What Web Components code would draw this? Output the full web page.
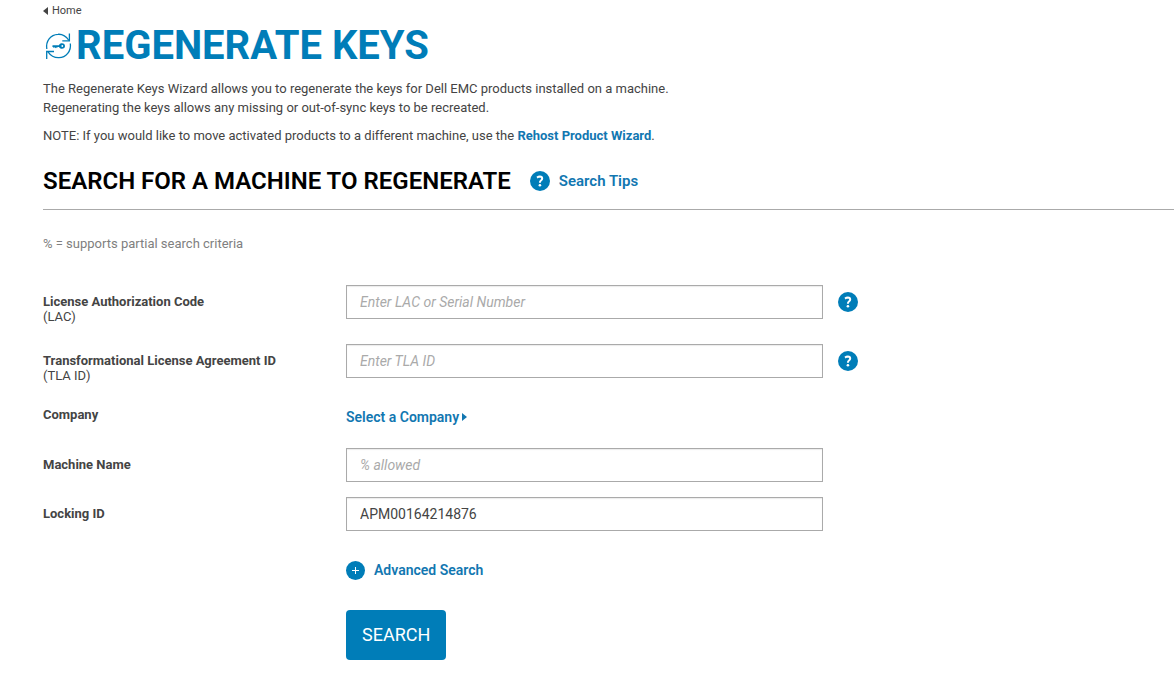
<!DOCTYPE html>
<html lang="en">
<head>
<meta charset="utf-8">
<meta name="viewport" content="width=device-width, initial-scale=1">
<title>Regenerate Keys</title>
<style>
  body {
    --brand: #007db8;
    --link: #1277b1;
    --line: #aaa;
    margin: 0;
    background: #fff;
    color: #444;
    font: 13px/19px Roboto, "Liberation Sans", sans-serif;
  }
</style>
</head>
<body>
<regenerate-page></regenerate-page>

<script>
class HelpIcon extends HTMLElement {
  constructor() {
    super()
    this.attachShadow({ mode: 'open' }).innerHTML = `
      <style>
        :host { display: block; flex: none; width: 20px; height: 20px; }
        svg { display: block; }
      </style>
      <svg width="20" height="20" viewBox="0 0 20 20" fill="none" aria-hidden="true">
        <circle cx="10" cy="10" r="10" fill="#007db8"/>
        <path d="M7 6.600Q8.400 5.600 9.900 5.600Q12.200 5.700 12.200 7.600Q12.200 8.700 11 9.500Q9.900 10.200 9.900 11.800" stroke="#fff" stroke-width="2"/>
        <circle cx="9.900" cy="14.300" r="1.300" fill="#fff"/>
      </svg>
    `
  }
}

class PageTitle extends HTMLElement {
  constructor() {
    super()
    this.attachShadow({ mode: 'open' }).innerHTML = `
      <style>
        :host { display: flex; align-items: center; gap: 4px; padding-left: 2px; color: var(--brand); }
        svg { flex: none; }
        h1 { margin: 0; font-size: 40px; line-height: 48px; font-weight: 700; text-transform: uppercase; }
      </style>
      <svg width="27" height="28" viewBox="0 0 27 28" fill="none" stroke="currentColor" stroke-width="1.3" aria-hidden="true">
        <path d="M1.800 17C.5 9.500 5.500 2.600 13 2.300C17.500 2 21.500 4.800 24 8.500"/>
        <path d="M24.400 1.500V8.800H17.300"/>
        <path d="M25.300 11.500C26.500 19 21 25.600 14 25.700C9.500 25.900 5.500 23.500 2.800 19.600"/>
        <path d="M1.700 27V19.500H9"/>
        <path fill="currentColor" stroke="none" fill-rule="evenodd" d="M7 14L8 13.200H14C14.500 11.700 15.600 11.200 17 11.200C18.900 11.200 20 12.400 20 14C20 15.700 18.800 16.800 17 16.800C15.500 16.800 14.500 16.200 14 15H12.500L12 16.200L11.200 15.200L10.300 16.200L9.500 15.200L8.500 15.800ZM17.300 13.100A.9.9 0 1 0 17.300 14.900A.9.9 0 1 0 17.300 13.100Z"/>
      </svg>
      <h1><slot></slot></h1>
    `
  }
}

class SearchHeading extends HTMLElement {
  constructor() {
    super()
    this.attachShadow({ mode: 'open' }).innerHTML = `
      <style>
        :host { display: flex; align-items: center; gap: 19px; padding-bottom: 12px; border-bottom: 1px solid var(--line); }
        h2 { margin: 0; color: #000; font-size: 24px; line-height: 32px; font-weight: 600; text-transform: uppercase; }
        a { display: flex; align-items: center; gap: 9px; color: var(--link); font-size: 15px; font-weight: 600; text-decoration: none; }
        a:hover { text-decoration: underline; }
      </style>
      <h2><slot></slot></h2>
      <a href="#tips"><help-icon></help-icon>Search Tips</a>
    `
  }
}

class FormField extends HTMLElement {
  constructor() {
    super()
    this.attachShadow({ mode: 'open' })
  }

  connectedCallback() {
    const label = this.getAttribute('label')
    const note = this.getAttribute('note')
    this.shadowRoot.innerHTML = `
      <style>
        :host { display: grid; grid-template-columns: var(--label-width) minmax(0, 477px) auto; align-items: start; }
        label { padding-top: 9px; line-height: 15px; }
        label b { display: block; font-weight: 700; }
        .note { display: block; padding-bottom: 5px; }
        input { box-sizing: border-box; width: 100%; height: 34px; margin: 0; padding: 0 13px; border: 1px solid var(--line); border-radius: 0; box-shadow: inset 0 1px 1px rgba(0,0,0,0.08); background: #fff; color: #444; font: 14px/20px Roboto, "Liberation Sans", sans-serif; }
        input::placeholder { color: #aaa; font-style: italic; opacity: 1; }
        button { margin: 7px 0 0 15px; padding: 0; border: 0; background: none; cursor: pointer; }
      </style>
      <label for="field"><b>${label}</b>${note ? `<span class="note">${note}</span>` : ''}</label>
      <input id="field" type="text" placeholder="${this.getAttribute('placeholder') || ''}" value="${this.getAttribute('value') || ''}">
      ${this.hasAttribute('help') ? `<button type="button" aria-label="Help for ${label}"><help-icon></help-icon></button>` : ''}
    `
  }
}

class CompanyField extends HTMLElement {
  constructor() {
    super()
    this.attachShadow({ mode: 'open' }).innerHTML = `
      <style>
        :host { display: grid; grid-template-columns: var(--label-width) 1fr; align-items: start; height: 30px; }
        b { padding-top: 4px; line-height: 15px; font-weight: 700; }
        a { display: flex; align-items: center; gap: 3px; width: fit-content; padding-top: 4px; color: var(--link); font-size: 14px; line-height: 20px; font-weight: 600; text-decoration: none; }
      </style>
      <b>Company</b>
      <a href="#company">Select a Company<svg width="5" height="8" viewBox="0 0 5 8" aria-hidden="true"><path d="M0 0L5 4L0 8Z" fill="currentColor"/></svg></a>
    `
  }
}

class FormActions extends HTMLElement {
  constructor() {
    super()
    this.attachShadow({ mode: 'open' }).innerHTML = `
      <style>
        :host { display: flex; flex-direction: column; align-items: flex-start; gap: 30px; padding: 14px 0 20px var(--label-width); }
        button { border: 0; cursor: pointer; font-family: inherit; }
        .advanced { display: flex; align-items: center; gap: 9px; padding: 0; background: none; color: var(--link); font-size: 14px; line-height: 20px; font-weight: 600; }
        .search { height: 50px; padding: 0 16px; border-radius: 4px; background: var(--brand); color: #fff; font-size: 18px; line-height: 24px; text-transform: uppercase; }
      </style>
      <button class="advanced" type="button">
        <svg width="19" height="19" viewBox="0 0 19 19" aria-hidden="true"><circle cx="9.500" cy="9.500" r="9.500" fill="#007db8"/><path d="M6 9.500H13M9.500 6V13" stroke="#fff"/></svg>
        Advanced Search
      </button>
      <button class="search" type="button">Search</button>
    `
  }
}

class RegeneratePage extends HTMLElement {
  constructor() {
    super()
    this.attachShadow({ mode: 'open' }).innerHTML = `
      <style>
        :host { display: block; --label-width: 303px; padding: 3px 0 0 43px; }
        .home { display: flex; align-items: center; gap: 4px; width: fit-content; color: inherit; font-size: 11px; line-height: 15px; text-decoration: none; }
        page-title { margin-top: 4px; }
        p { margin: 0; }
        .intro { margin-top: 9px; }
        .note { margin-top: 9px; }
        .note a { color: var(--link); font-weight: 700; text-decoration: none; }
        search-heading { margin-top: 20px; }
        .hint { margin-top: 24px; color: #808080; }
        form { display: flex; flex-direction: column; gap: 15px; margin-top: 32px; }
      </style>
      <main>
        <a class="home" href="#home"><svg width="5" height="8" viewBox="0 0 5 8" aria-hidden="true"><path d="M5 0L0 4L5 8Z" fill="currentColor"/></svg>Home</a>
        <page-title>Regenerate Keys</page-title>
        <p class="intro">The Regenerate Keys Wizard allows you to regenerate the keys for Dell EMC products installed on a machine.<br>Regenerating the keys allows any missing or out-of-sync keys to be recreated.</p>
        <p class="note">NOTE: If you would like to move activated products to a different machine, use the <a href="#rehost">Rehost Product Wizard</a>.</p>
        <search-heading>Search for a machine to regenerate</search-heading>
        <p class="hint">% = supports partial search criteria</p>
        <form>
          <form-field label="License Authorization Code" note="(LAC)" placeholder="Enter LAC or Serial Number" help></form-field>
          <form-field label="Transformational License Agreement ID" note="(TLA ID)" placeholder="Enter TLA ID" help></form-field>
          <company-field></company-field>
          <form-field label="Machine Name" placeholder="% allowed"></form-field>
          <form-field label="Locking ID" value="APM00164214876"></form-field>
          <form-actions></form-actions>
        </form>
      </main>
    `
  }
}

customElements.define('help-icon', HelpIcon)
customElements.define('page-title', PageTitle)
customElements.define('search-heading', SearchHeading)
customElements.define('form-field', FormField)
customElements.define('company-field', CompanyField)
customElements.define('form-actions', FormActions)
customElements.define('regenerate-page', RegeneratePage)
</script>
</body>
</html>
